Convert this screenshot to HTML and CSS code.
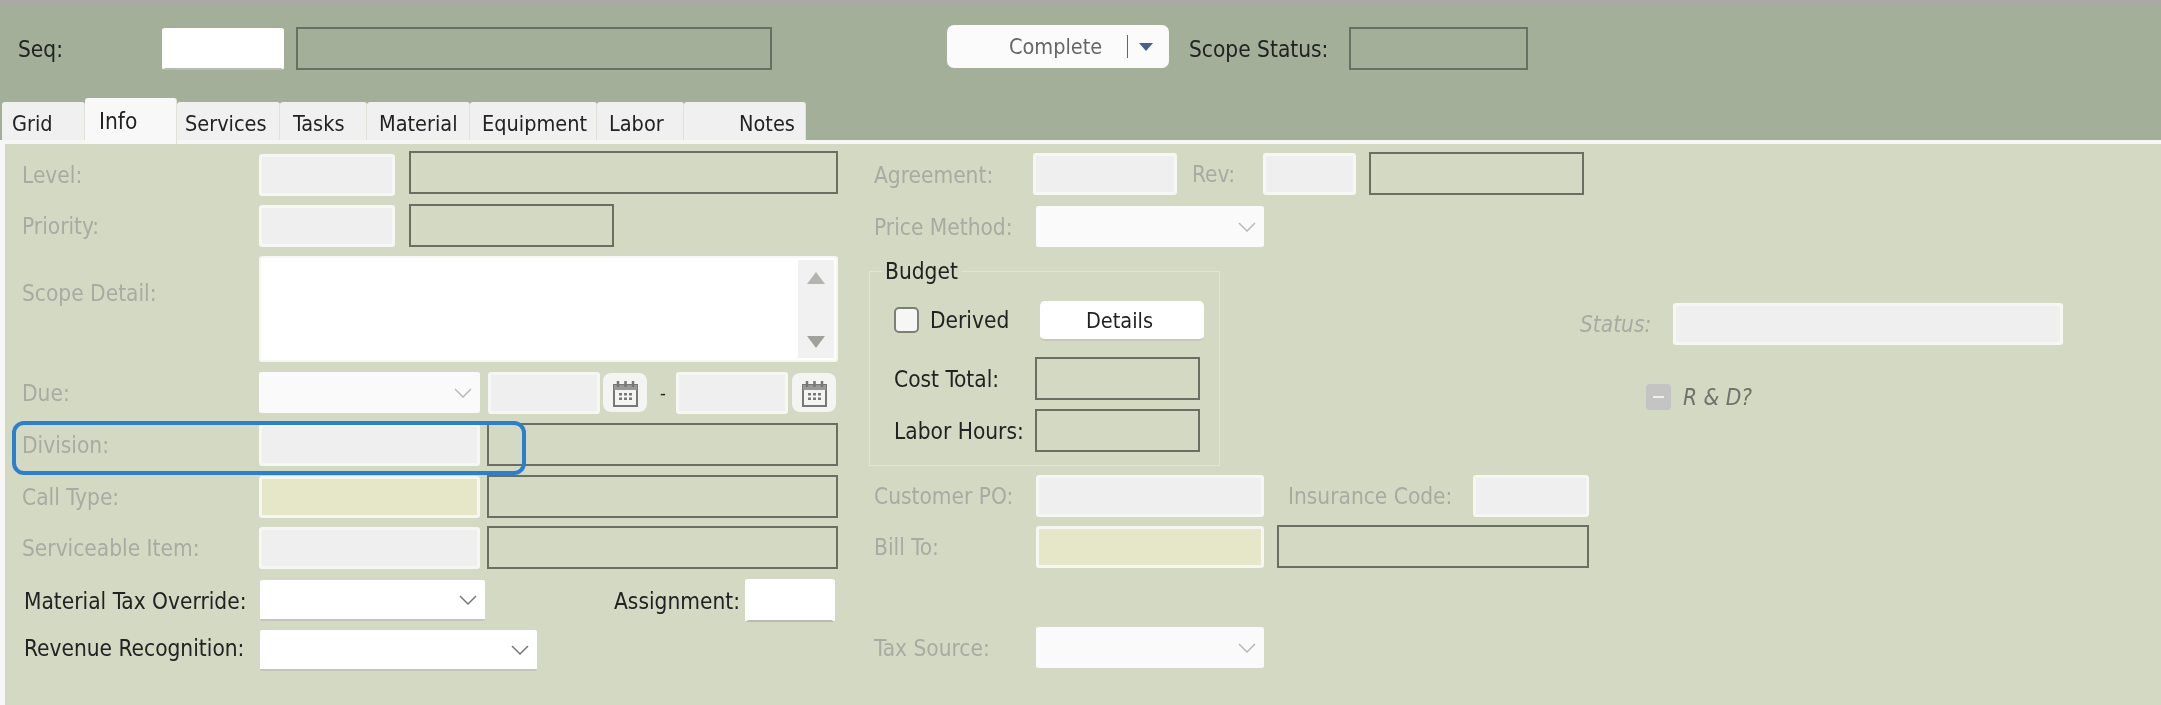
FILE: index.html
```html
<!DOCTYPE html>
<html lang="en">
<head>
<meta charset="utf-8">
<title>Scope Info</title>
<link rel="stylesheet" href="styles.css">
</head>
<body>
<div class="app">
  <header class="head">
    <div class="head-row">
      <span class="lbl seq-lbl">Seq:</span>
      <input class="fld white seq-in">
      <div class="box seq-box"></div>
      <button class="split"><span class="split-text">Complete</span><span class="split-div"></span><svg class="split-arrow" width="14" height="8" viewBox="0 0 14 8"><path d="M0 0h14L7 8z" fill="#47618f"/></svg></button>
      <span class="lbl scope-lbl">Scope Status:</span>
      <div class="box scope-box"></div>
    </div>
    <nav class="tabs">
      <span class="tab t-grid">Grid</span>
      <span class="tab active t-info">Info</span>
      <span class="tab t-serv">Services</span>
      <span class="tab t-task">Tasks</span>
      <span class="tab t-mat">Material</span>
      <span class="tab t-equip">Equipment</span>
      <span class="tab t-lab">Labor</span>
      <span class="tab t-notes">Notes</span>
    </nav>
  </header>

  <main class="panel">
    <section class="left">
      <div class="row"><span class="lbl off lw level-lbl">Level:</span><input class="fld w136 level-in" disabled><div class="box ml14 w429"></div></div>
      <div class="row"><span class="lbl off lw">Priority:</span><input class="fld w136" disabled><div class="box ml14 w205"></div></div>
      <div class="row top"><span class="lbl off lw detail-lbl">Scope Detail:</span>
        <div class="memo">
          <div class="memo-bar">
            <svg width="18" height="12" viewBox="0 0 18 12"><path d="M9 0l9 12H0z" fill="#b4b4b0"/></svg>
            <svg width="18" height="12" viewBox="0 0 18 12"><path d="M0 0h18L9 12z" fill="#a0a09c"/></svg>
          </div>
        </div>
      </div>
      <div class="row"><span class="lbl off lw">Due:</span>
        <div class="sel dim w221"><svg class="chev" width="18" height="10" viewBox="0 0 18 10"><path d="M1 1l8 8 8-8" fill="none" stroke="#b9b9b9" stroke-width="1.5"/></svg></div>
        <input class="fld w112 ml8" disabled>
        <button class="cal ml3"><svg width="27" height="28" viewBox="0 0 27 28"><g fill="none" stroke="#777" stroke-width="2"><rect x="2" y="6" width="23" height="21"/></g><path d="M2 6h23v5H2z" fill="#999"/><path d="M6 2v6M13.500 2v6M21 2v6" stroke="#777" stroke-width="2.500"/><path d="M7 14h3v2.500H7zM12 14h3v2.500h-3zM17 14h3v2.500h-3zM7 18.500h3V21H7zM12 18.500h3V21h-3zM17 18.500h3V21h-3z" fill="#777"/></svg></button>
        <span class="dash">-</span>
        <input class="fld w112" disabled>
        <button class="cal ml4"><svg width="27" height="28" viewBox="0 0 27 28"><g fill="none" stroke="#777" stroke-width="2"><rect x="2" y="6" width="23" height="21"/></g><path d="M2 6h23v5H2z" fill="#999"/><path d="M6 2v6M13.500 2v6M21 2v6" stroke="#777" stroke-width="2.500"/><path d="M7 14h3v2.500H7zM12 14h3v2.500h-3zM17 14h3v2.500h-3zM7 18.500h3V21H7zM12 18.500h3V21h-3zM17 18.500h3V21h-3z" fill="#777"/></svg></button>
      </div>
      <div class="row ringed"><div class="ring"></div><span class="lbl off lw">Division:</span><input class="fld w221" disabled><div class="box ml7 w351"></div></div>
      <div class="row"><span class="lbl off lw">Call Type:</span><input class="fld req w221" disabled><div class="box ml7 w351"></div></div>
      <div class="row"><span class="lbl off lw">Serviceable Item:</span><input class="fld w221" disabled><div class="box ml7 w351"></div></div>
      <div class="row"><span class="lbl lw live-lbl">Material Tax Override:</span>
        <div class="sel live w225"><svg class="chev" width="18" height="10" viewBox="0 0 18 10"><path d="M1 1l8 8 8-8" fill="none" stroke="#777" stroke-width="1.500"/></svg></div>
        <span class="lbl assign-lbl">Assignment:</span>
        <input class="fld white w90">
      </div>
      <div class="row rev-row"><span class="lbl lw live-lbl rev-text">Revenue Recognition:</span>
        <div class="sel live w277"><svg class="chev" width="18" height="10" viewBox="0 0 18 10"><path d="M1 1l8 8 8-8" fill="none" stroke="#777" stroke-width="1.500"/></svg></div>
      </div>
    </section>

    <section class="mid">
      <div class="row"><span class="lbl off lm-a agree-lbl">Agreement:</span><input class="fld w144" disabled><span class="lbl off rev-lbl">Rev:</span><input class="fld w93" disabled><div class="box ml13 w215"></div></div>
      <div class="row"><span class="lbl off lm">Price Method:</span>
        <div class="sel dim w228"><svg class="chev" width="18" height="10" viewBox="0 0 18 10"><path d="M1 1l8 8 8-8" fill="none" stroke="#b9b9b9" stroke-width="1.500"/></svg></div>
      </div>
      <div class="budget-row">
        <fieldset class="budget">
          <legend>Budget</legend>
          <div class="b-top">
            <span class="check"></span><span class="lbl derived">Derived</span>
            <button class="details">Details</button>
          </div>
          <div class="b-line b-cost"><span class="lbl b-lbl">Cost Total:</span><div class="box w165"></div></div>
          <div class="b-line b-hours"><span class="lbl b-lbl">Labor Hours:</span><div class="box w165"></div></div>
        </fieldset>
        <div class="side">
          <div class="status-row"><span class="lbl off it status-lbl">Status:</span><input class="fld w390" disabled></div>
          <div class="rd-row"><span class="rd-check"></span><span class="lbl it rd-lbl">R &amp; D?</span></div>
        </div>
      </div>
      <div class="row"><span class="lbl off lm">Customer PO:</span><input class="fld w228" disabled><span class="lbl off ins-lbl">Insurance Code:</span><input class="fld w116" disabled></div>
      <div class="row"><span class="lbl off lm">Bill To:</span><input class="fld req w228" disabled><div class="box ml13 w312"></div></div>
      <div class="row"><span class="lbl off lm">Tax Source:</span>
        <div class="sel dim w228"><svg class="chev" width="18" height="10" viewBox="0 0 18 10"><path d="M1 1l8 8 8-8" fill="none" stroke="#b9b9b9" stroke-width="1.500"/></svg></div>
      </div>
    </section>
  </main>
</div>
</body>
</html>
```

FILE: styles.css
```css
* { box-sizing: border-box; }
html, body { margin: 0; height: 100%; overflow: hidden; background: #f6f6f4; }
body { font-family: "DejaVu Sans Condensed", "DejaVu Sans", sans-serif; font-stretch: condensed; font-size: 21.500px; color: #222; }
.app { width: 2161px; height: 705px; display: flex; flex-direction: column; filter: blur(0.7px); }

/* header */
.head { height: 140px; background: #a3af98; border-top: 6px solid #a9a9a7; display: flex; flex-direction: column; padding-left: 2px; }
.head-row { display: flex; align-items: center; height: 43px; margin-top: 21px; padding-left: 16px; }
.lbl { font-size: 22.500px; line-height: 26px; white-space: nowrap; color: #222; }
.seq-lbl { width: 144px; }
.seq-in { width: 122px; }
.seq-box { width: 476px; margin-left: 12px; }
.box { height: 43px; border: 2px solid #6a6f64; flex: none; }
.split { width: 222px; height: 43px; margin: -4px -1px 0 175px; border: 0; border-radius: 7px; background: #fbfbfb; font: inherit; color: #666; display: flex; align-items: center; padding: 0 0 0 62px; }
.split-text { width: 118px; text-align: left; }
.split-div { width: 1px; height: 23px; background: #666; }
.split-arrow { margin-left: 11px; }
.scope-lbl { width: 160px; margin-left: 21px; }
.scope-box { width: 179px; }

/* tabs */
.tabs { display: flex; margin-top: auto; height: 38px; align-items: flex-end; }
.tab { height: 38px; background: #f0f0f0; border-right: 1px solid #dfe2d8; border-radius: 3px 3px 0 0; line-height: 43px; }
.tab.active { height: 46px; margin-top: -5px; margin-bottom: -4px; background: #f8f8f8; line-height: 46px; position: relative; z-index: 1; font-size: 22.500px; }
.t-grid { width: 83px; padding-left: 10px; }
.t-info { width: 92px; padding-left: 14px; }
.t-serv { width: 103px; padding-left: 8px; }
.t-task { width: 87px; padding-left: 13px; }
.t-mat { width: 103px; padding-left: 12px; }
.t-equip { width: 127px; padding-left: 12px; }
.t-lab { width: 87px; padding-left: 12px; }
.t-notes { width: 122px; padding-left: 55px; }

/* panel */
.panel { flex: 1; border-top: 4px solid #f6f6f4; background: #d4d9c3; display: flex; padding-top: 7px; border-left: 5px solid #f6f6f4; }
.left { width: 852px; padding-left: 17px; display: grid; grid-template-rows: 53px 52px 115px 52px 52px 51px 53px 50px 45px; align-content: start; }
.mid { width: 1200px; margin-left: 17px; display: grid; grid-template-rows: 53px 52px 217px 51px 101px 45px; align-content: start; padding-top: 1px; }
.row { display: flex; align-items: center; height: 43px; }
.row.top { height: 106px; align-items: flex-start; }
.off { color: #a9aba2; }
.it { font-style: italic; }
.lw { width: 237px; flex: none; }
.lm { width: 162px; flex: none; }
.lm-a { width: 159px; flex: none; }
.detail-lbl { margin-top: 24px; }
.level-lbl { padding-top: 4px; }
.level-in { margin-top: 4px; }
.agree-lbl { padding-top: 2px; }
.live-lbl { padding-left: 2px; margin-right: 1px; }
.rev-text { margin-top: -5px; }

/* fields */
.fld { height: 42px; border: 3px solid #f6f6f3; border-radius: 3px; background: #efefef; padding: 0; flex: none; outline: 0; display: block; }
.fld.white { background: #fff; border-color: #fff; border-bottom-color: #b9bab2; border-bottom-width: 2px; }
.fld.req { background: #e6e6c8; }
.w90 { width: 90px; height: 43px; }
.w93 { width: 93px; }
.w112 { width: 112px; }
.w116 { width: 116px; }
.w136 { width: 136px; }
.w144 { width: 144px; }
.w165 { width: 165px; }
.w205 { width: 205px; }
.w215 { width: 215px; }
.w221 { width: 221px; }
.w225 { width: 225px; }
.w228 { width: 228px; }
.w277 { width: 277px; }
.w312 { width: 312px; }
.w351 { width: 351px; }
.w390 { width: 390px; }
.w429 { width: 429px; }
.ml3 { margin-left: 3px; }
.ml4 { margin-left: 4px; }
.ml7 { margin-left: 7px; }
.ml8 { margin-left: 8px; }
.ml13 { margin-left: 13px; }
.ml14 { margin-left: 14px; }

.sel { height: 41px; display: flex; align-items: center; justify-content: flex-end; padding-right: 8px; flex: none; border-radius: 2px; }
.sel.dim { background: #fafafa; }
.sel.live { background: #fff; border-bottom: 2px solid #c4c5bc; }

.memo { width: 579px; height: 106px; background: #fff; border: 2px solid #f6f6f3; border-radius: 3px; display: flex; justify-content: flex-end; padding: 2px 0; }
.memo-bar { width: 36px; margin-right: 2px; background: #f1f1f1; display: flex; flex-direction: column; justify-content: space-between; align-items: center; padding: 12px 0 10px; }

.cal { width: 44px; height: 39px; border: 0; border-radius: 8px; background: #f4f4f2; padding: 0; display: flex; align-items: center; justify-content: center; flex: none; }
.dash { width: 29px; padding-left: 3px; text-align: center; color: #222; font-size: 18px; }

.ringed { position: relative; }
.ring { position: absolute; left: -10px; top: -2px; width: 514px; height: 54px; border: 4px solid #2b7fcb; border-radius: 12px; z-index: 2; pointer-events: none; }

.assign-lbl { width: 131px; margin-left: 129px; }

/* middle column */
.rev-lbl { width: 71px; margin-left: 15px; }
.ins-lbl { width: 185px; margin-left: 24px; }

.budget-row { display: flex; align-items: flex-start; margin-left: -5px; height: 217px; }
.budget { width: 351px; height: 209px; margin: 0; padding: 20px 15px 0 24px; border: 1px solid #e0e4d4; flex: none; min-width: 0; }
.budget legend { padding: 0 3px; margin-left: -12px; font-size: 22.500px; line-height: 28px; color: #222; }
.b-top { display: flex; align-items: center; height: 40px; margin-top: -4px; }
.check { width: 25px; height: 26px; border: 2px solid #7d8077; border-radius: 5px; background: #f6f6f4; flex: none; margin-bottom: 3px; }
.derived { width: 110px; margin-left: 11px; margin-bottom: 3px; }
.details { width: 164px; height: 40px; border: 0; border-bottom: 2px solid #c6c8ba; border-radius: 5px; background: #fff; font: inherit; color: #222; padding: 0 5px 0 0; }
.b-line { display: flex; align-items: center; height: 43px; }
.b-cost { margin-top: 16px; }
.b-hours { margin-top: 9px; }
.b-lbl { width: 141px; flex: none; }

.side { display: flex; flex-direction: column; }
.status-row { display: flex; align-items: center; margin-top: 46px; margin-left: 360px; }
.status-lbl { width: 93px; flex: none; }
.rd-row { display: flex; align-items: center; margin-top: 39px; margin-left: 426px; }
.rd-check { width: 25px; height: 26px; border-radius: 4px; background: #c4c4c4; position: relative; flex: none; }
.rd-check::after { content: ""; position: absolute; left: 7px; top: 12px; width: 11px; height: 2px; background: #f0f0f0; }
.rd-lbl { margin-left: 12px; color: #70736c; }
```
